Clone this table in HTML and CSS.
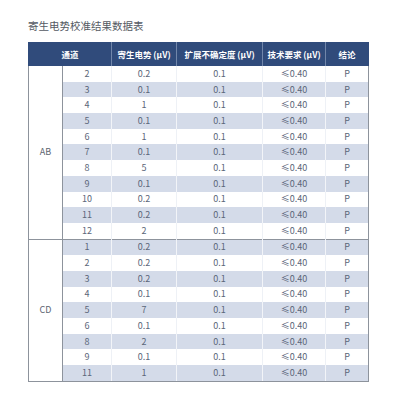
FILE: index.html
```html
<!DOCTYPE html>
<html lang="zh">
<head>
<meta charset="utf-8">
<link rel="stylesheet" href="styles.css">
</head>
<body>
<div class="page">
  <h1 class="title">寄生电势校准结果数据表</h1>
  <table class="data">
    <colgroup>
      <col class="c-group"><col class="c-ch"><col class="c-v"><col class="c-u"><col class="c-req"><col class="c-res">
    </colgroup>
    <thead>
      <tr>
        <th colspan="2">通道</th>
        <th>寄生电势 (μV)</th>
        <th>扩展不确定度 (μV)</th>
        <th>技术要求 (μV)</th>
        <th>结论</th>
      </tr>
    </thead>
    <tbody class="ab">
      <tr><td class="group" rowspan="11">AB</td><td>2</td><td>0.2</td><td>0.1</td><td>≤0.40</td><td>P</td></tr>
      <tr class="alt"><td>3</td><td>0.1</td><td>0.1</td><td>≤0.40</td><td>P</td></tr>
      <tr><td>4</td><td>1</td><td>0.1</td><td>≤0.40</td><td>P</td></tr>
      <tr class="alt"><td>5</td><td>0.1</td><td>0.1</td><td>≤0.40</td><td>P</td></tr>
      <tr><td>6</td><td>1</td><td>0.1</td><td>≤0.40</td><td>P</td></tr>
      <tr class="alt"><td>7</td><td>0.1</td><td>0.1</td><td>≤0.40</td><td>P</td></tr>
      <tr><td>8</td><td>5</td><td>0.1</td><td>≤0.40</td><td>P</td></tr>
      <tr class="alt"><td>9</td><td>0.1</td><td>0.1</td><td>≤0.40</td><td>P</td></tr>
      <tr><td>10</td><td>0.2</td><td>0.1</td><td>≤0.40</td><td>P</td></tr>
      <tr class="alt"><td>11</td><td>0.2</td><td>0.1</td><td>≤0.40</td><td>P</td></tr>
      <tr><td>12</td><td>2</td><td>0.1</td><td>≤0.40</td><td>P</td></tr>
    </tbody>
    <tbody class="cd">
      <tr class="alt"><td class="group" rowspan="9">CD</td><td>1</td><td>0.2</td><td>0.1</td><td>≤0.40</td><td>P</td></tr>
      <tr><td>2</td><td>0.2</td><td>0.1</td><td>≤0.40</td><td>P</td></tr>
      <tr class="alt"><td>3</td><td>0.2</td><td>0.1</td><td>≤0.40</td><td>P</td></tr>
      <tr><td>4</td><td>0.1</td><td>0.1</td><td>≤0.40</td><td>P</td></tr>
      <tr class="alt"><td>5</td><td>7</td><td>0.1</td><td>≤0.40</td><td>P</td></tr>
      <tr><td>6</td><td>0.1</td><td>0.1</td><td>≤0.40</td><td>P</td></tr>
      <tr class="alt"><td>8</td><td>2</td><td>0.1</td><td>≤0.40</td><td>P</td></tr>
      <tr><td>9</td><td>0.1</td><td>0.1</td><td>≤0.40</td><td>P</td></tr>
      <tr class="alt"><td>11</td><td>1</td><td>0.1</td><td>≤0.40</td><td>P</td></tr>
    </tbody>
  </table>
</div>
</body>
</html>
```

FILE: styles.css
```css
html, body {
  margin: 0;
  padding: 0;
  background: #ffffff;
}

.page {
  padding: 19px 0 0 28px;
  font-family: "Noto Sans CJK SC", "Noto Sans", sans-serif;
}

.title {
  margin: 0 0 10px 0;
  font-size: 10.5px;
  line-height: 13px;
  font-weight: 400;
  color: #555a63;
}

.data {
  width: 340px;
  border-collapse: collapse;
  table-layout: fixed;
  font-size: 9px;
  color: #5b6679;
}

.c-group { width: 34px; }
.c-ch { width: 49px; }
.c-v { width: 65px; }
.c-u { width: 86px; }
.c-req { width: 63px; }
.c-res { width: 43px; }

.data th {
  height: 24px;
  padding: 0;
  background: #304b7b;
  color: #ffffff;
  font-weight: 700;
  font-size: 8.5px;
  text-align: center;
  border-left: 1px solid #7186aa;
}

.data th:first-child {
  border-left: 1px solid #304b7b;
}

.data th:last-child {
  border-right: 1px solid #304b7b;
}

.data td {
  height: 15.7px;
  padding: 0;
  line-height: 12px;
  text-align: center;
  border-left: 1px solid #eef1f6;
}

.data tr.alt td {
  background: #d4dbe9;
  border-left-color: #f2f4f8;
}

.data td:last-child {
  border-right: 1px solid #8d939c;
}

.data td.group {
  background: #ffffff;
  border-left: 1px solid #8d939c;
  border-right: 1px solid #8d939c;
  color: #5d6470;
  font-size: 9px;
}

.data tr.alt td.group {
  background: #ffffff;
  border-left-color: #8d939c;
}

.data td.group + td {
  border-left: 1px solid #8d939c;
}

.cd tr:first-child td {
  border-top: 1px solid #8d939c;
}

.cd tr:last-child td {
  border-bottom: 1px solid #8d939c;
}

.cd td.group {
  border-bottom: 1px solid #8d939c;
}
```
